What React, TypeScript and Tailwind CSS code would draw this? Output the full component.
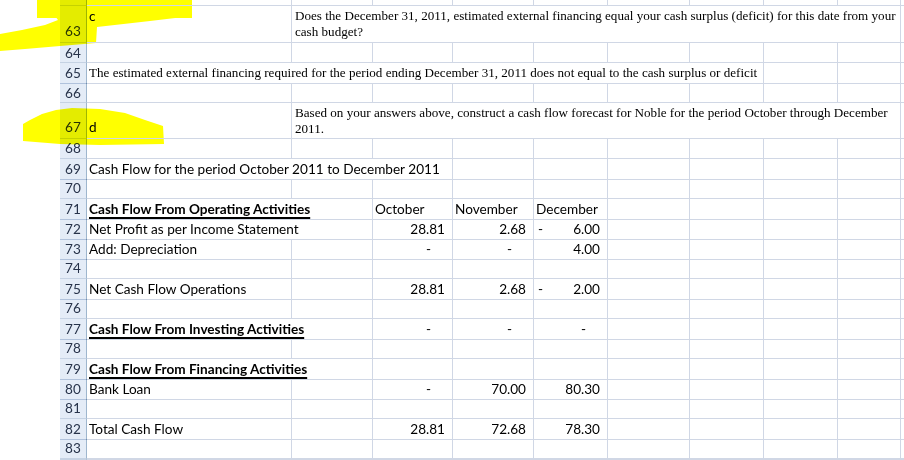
import React from "react";

type Cell = {
  span?: number;
  text?: React.ReactNode;
  kind?: "text" | "num" | "neg" | "dash" | "serif" | "wrap" | "top" | "bottom";
  bold?: boolean;
};

type RowDef = {
  label: string;
  h: string;
  labelPos?: "center" | "bottom";
  cells: Cell[];
};

const spanClass: Record<number, string> = {
  1: "col-span-1",
  2: "col-span-2",
  3: "col-span-3",
  4: "col-span-4",
  5: "col-span-5",
  6: "col-span-6",
  7: "col-span-7",
  8: "col-span-8",
  9: "col-span-9",
};

const calibri = "font-['Lato',_sans-serif] text-[13.6px]";
const times = "font-['Liberation_Serif',_serif] text-[13.1px]";

const blanks = (n: number): Cell[] => Array.from({ length: n }, () => ({}));

const rows: RowDef[] = [
  { label: "", h: "h-[6px]", cells: blanks(9) },
  {
    label: "63",
    h: "h-[38px]",
    labelPos: "bottom",
    cells: [
      { kind: "top", text: "c" },
      {
        span: 8,
        kind: "wrap",
        text: (
          <>
            <div>Does the December 31, 2011, estimated external financing equal your cash surplus (deficit) for this date from your</div>
            <div>cash budget?</div>
          </>
        ),
      },
    ],
  },
  { label: "64", h: "h-[20px]", cells: blanks(9) },
  {
    label: "65",
    h: "h-[20px]",
    cells: [
      {
        span: 7,
        kind: "serif",
        text: "The estimated external financing required for the period ending December 31, 2011 does not equal to the cash surplus or deficit",
      },
      {},
      {},
    ],
  },
  { label: "66", h: "h-[20px]", cells: blanks(9) },
  {
    label: "67",
    h: "h-[36px]",
    labelPos: "bottom",
    cells: [
      { kind: "bottom", text: "d" },
      {
        span: 8,
        kind: "wrap",
        text: (
          <>
            <div>Based on your answers above, construct a cash flow forecast for Noble for the period October through December</div>
            <div>2011.</div>
          </>
        ),
      },
    ],
  },
  { label: "68", h: "h-[20px]", cells: blanks(9) },
  {
    label: "69",
    h: "h-[20px]",
    cells: [{ span: 3, text: "Cash Flow for the period October 2011 to December 2011" }, ...blanks(6)],
  },
  { label: "70", h: "h-[20px]", cells: blanks(9) },
  {
    label: "71",
    h: "h-[20px]",
    cells: [
      { span: 2, bold: true, text: "Cash Flow From Operating Activities" },
      { text: "October" },
      { text: "November" },
      { text: "December" },
      ...blanks(4),
    ],
  },
  {
    label: "72",
    h: "h-[20px]",
    cells: [
      { span: 2, text: "Net Profit as per Income Statement" },
      { kind: "num", text: "28.81" },
      { kind: "num", text: "2.68" },
      { kind: "neg", text: "6.00" },
      ...blanks(4),
    ],
  },
  {
    label: "73",
    h: "h-[20px]",
    cells: [
      { text: "Add: Depreciation" },
      {},
      { kind: "dash" },
      { kind: "dash" },
      { kind: "num", text: "4.00" },
      ...blanks(4),
    ],
  },
  { label: "74", h: "h-[20px]", cells: blanks(9) },
  {
    label: "75",
    h: "h-[20px]",
    cells: [
      { text: "Net Cash Flow Operations" },
      {},
      { kind: "num", text: "28.81" },
      { kind: "num", text: "2.68" },
      { kind: "neg", text: "2.00" },
      ...blanks(4),
    ],
  },
  { label: "76", h: "h-[20px]", cells: blanks(9) },
  {
    label: "77",
    h: "h-[20px]",
    cells: [
      { span: 2, bold: true, text: "Cash Flow From Investing Activities" },
      { kind: "dash" },
      { kind: "dash" },
      { kind: "dash" },
      ...blanks(4),
    ],
  },
  { label: "78", h: "h-[20px]", cells: blanks(9) },
  {
    label: "79",
    h: "h-[20px]",
    cells: [{ span: 2, bold: true, text: "Cash Flow From Financing Activities" }, ...blanks(7)],
  },
  {
    label: "80",
    h: "h-[20px]",
    cells: [
      { text: "Bank Loan" },
      {},
      { kind: "dash" },
      { kind: "num", text: "70.00" },
      { kind: "num", text: "80.30" },
      ...blanks(4),
    ],
  },
  { label: "81", h: "h-[20px]", cells: blanks(9) },
  {
    label: "82",
    h: "h-[20px]",
    cells: [
      { text: "Total Cash Flow" },
      {},
      { kind: "num", text: "28.81" },
      { kind: "num", text: "72.68" },
      { kind: "num", text: "78.30" },
      ...blanks(4),
    ],
  },
  { label: "83", h: "h-[20px]", cells: blanks(9) },
  { label: "", h: "h-[1px]", cells: blanks(9) },
];

function CellView({ cell }: { cell: Cell }) {
  const base = `${spanClass[cell.span ?? 1]} border-r border-b border-[#d0d7e5] min-w-0 text-black`;
  switch (cell.kind) {
    case "num":
      return <div className={`${base} ${calibri} flex items-center justify-end pr-[7px]`}>{cell.text}</div>;
    case "neg":
      return (
        <div className={`${base} ${calibri} flex items-center justify-between pl-[4px] pr-[7px]`}>
          <span>-</span>
          <span>{cell.text}</span>
        </div>
      );
    case "dash":
      return <div className={`${base} ${calibri} flex items-center justify-end pr-[21px]`}>-</div>;
    case "serif":
      return <div className={`${base} ${times} flex items-center pl-[2px] whitespace-nowrap`}>{cell.text}</div>;
    case "wrap":
      return (
        <div className={`${base} ${times} flex flex-col justify-center pl-[3px] whitespace-nowrap leading-[16px]`}>
          {cell.text}
        </div>
      );
    case "top":
      return <div className={`${base} ${calibri} pl-[2px] pt-[2px] leading-[16px]`}>{cell.text}</div>;
    case "bottom":
      return <div className={`${base} ${calibri} flex items-end pl-[2px] pb-[1px]`}>{cell.text}</div>;
    default:
      return (
        <div
          className={`${base} ${calibri} flex items-center pl-[2px] whitespace-nowrap ${
            cell.bold ? "font-bold underline underline-offset-[3px] decoration-[1.5px]" : ""
          }`}
        >
          {cell.text}
        </div>
      );
  }
}

function SheetRow({ row }: { row: RowDef }) {
  return (
    <div className={`grid grid-cols-[27px_205px_81px_80px_81px_74px_82px_74px_74px_63px_1fr] ${row.h}`}>
      <div
        className={`bg-[#e4ecf7] mix-blend-multiply border-r border-b border-r-[#9eb6ce] border-b-[#c5d2e3] flex justify-center overflow-hidden ${
          row.labelPos === "bottom" ? "items-end pb-[1px]" : "items-center"
        } ${calibri} text-[#27334a]`}
      >
        {row.label}
      </div>
      {row.cells.map((c, i) => (
        <CellView key={i} cell={c} />
      ))}
      <div className="border-b border-[#d0d7e5]" />
    </div>
  );
}

// highlighter strokes, painted under the transparent cells
function Highlights() {
  return (
    <svg className="absolute left-0 top-0 w-[904px] h-[460px]" viewBox="0 0 904 460">
      <path fill="#ffff00" d="M37 0 H192 V18 H37 Z" />
      <path fill="#ffff00" d="M192 16 L150 21 L97 27 L96 43 L60 46 L25 49 L0 51 L0 34 L22 30 L45 25 L58 20 L52 12 L40 4 L100 4 Z" />
      <path
        fill="#ffff00"
        d="M23 124 L30 120 L42 114 L56 110 L72 108 L100 109 L125 113 L145 120 L163 126 L164 144 L100 145 L60 144 L23 141 Z"
      />
    </svg>
  );
}

export default function App() {
  return (
    <div className="relative isolate w-[904px] h-[460px] overflow-hidden bg-white">
      <Highlights />
      <div className="relative flex h-full">
        <div className="w-[60px] shrink-0" />
        <div className="flex-1 flex flex-col">
          {rows.map((r, i) => (
            <SheetRow key={i} row={r} />
          ))}
        </div>
      </div>
    </div>
  );
}
